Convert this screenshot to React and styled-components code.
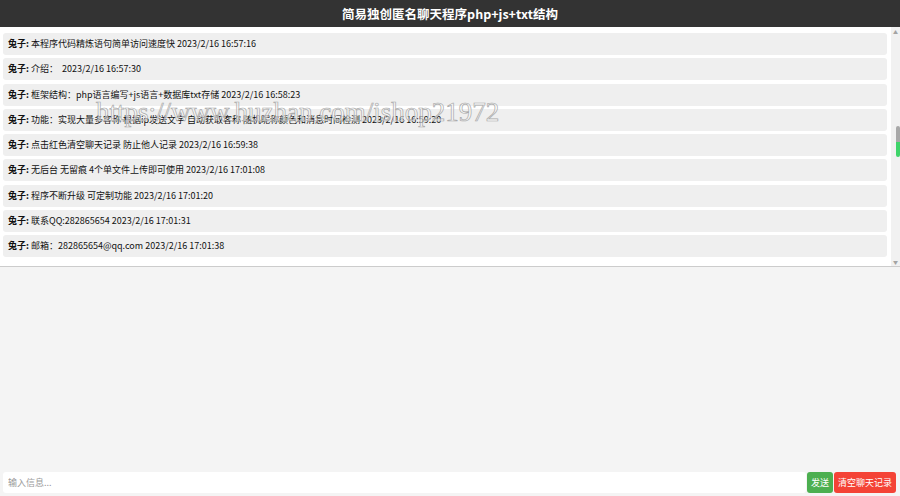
import React from 'react';
import styled, { createGlobalStyle } from 'styled-components';

const messages = [
  { text: '本程序代码精炼语句简单访问速度快', time: '2023/2/16 16:57:16' },
  { text: '介绍： ', time: '2023/2/16 16:57:30' },
  { text: '框架结构：php语言编写+js语言+数据库txt存储', time: '2023/2/16 16:58:23' },
  { text: '功能：实现大量多客称 根据ip发送文字 自动获取客称 随机昵称颜色和消息时间检测', time: '2023/2/16 16:59:20' },
  { text: '点击红色清空聊天记录 防止他人记录', time: '2023/2/16 16:59:38' },
  { text: '无后台 无留痕 4个单文件上传即可使用', time: '2023/2/16 17:01:08' },
  { text: '程序不断升级 可定制功能', time: '2023/2/16 17:01:20' },
  { text: '联系QQ:282865654', time: '2023/2/16 17:01:31' },
  { text: '邮箱：282865654@qq.com', time: '2023/2/16 17:01:38' },
];

export default function App() {
  return (
    <>
      <GlobalStyle />
      <Page>
        <Header>简易独创匿名聊天程序php+js+txt结构</Header>
        <ChatBox>
          <MessageList>
            {messages.map((m, i) => (
              <Message key={i}>
                <Nick>兔子:</Nick> {m.text} {m.time}
              </Message>
            ))}
          </MessageList>
          <ScrollTrack>
            <Arrow>▲</Arrow>
            <ThumbArea>
              <Thumb />
            </ThumbArea>
            <Arrow>▼</Arrow>
          </ScrollTrack>
          <Watermark>https://www.huzhan.com/ishop21972</Watermark>
        </ChatBox>
        <Spacer />
        <InputRow>
          <MessageInput placeholder="输入信息..." />
          <ActionButton color="#4caf50">发送</ActionButton>
          <ActionButton color="#f44336">清空聊天记录</ActionButton>
        </InputRow>
      </Page>
    </>
  );
}

const GlobalStyle = createGlobalStyle`
  html, body {
    margin: 0;
    padding: 0;
    height: 100%;
  }
  body {
    font-family: "Noto Sans CJK SC", "Noto Sans", sans-serif;
    background: #f4f4f4;
  }
  #root {
    height: 100%;
  }
`;

const Page = styled.div`
  display: flex;
  flex-direction: column;
  height: 100vh;
`;

const Header = styled.div`
  height: 27px;
  flex-shrink: 0;
  background: #333333;
  color: #fff;
  font-weight: bold;
  font-size: 12.5px;
  display: flex;
  align-items: center;
  justify-content: center;
`;

const ChatBox = styled.div`
  position: relative;
  height: 239px;
  flex-shrink: 0;
  background: #fff;
  border-bottom: 1px solid #cccccc;
  display: flex;
  overflow: hidden;
`;

const MessageList = styled.div`
  flex: 1;
  padding: 6px 4px 0 3px;
  display: flex;
  flex-direction: column;
  gap: 3.25px;
`;

const Message = styled.div`
  background: #efefef;
  border-radius: 3px;
  height: 22px;
  line-height: 22px;
  padding: 0 5px;
  font-size: 9px;
  color: #111;
  white-space: pre;
`;

const Nick = styled.span`
  font-weight: bold;
`;

const ScrollTrack = styled.div`
  width: 9px;
  background: #f1f1f1;
  display: flex;
  flex-direction: column;
`;

const Arrow = styled.div`
  height: 9px;
  font-size: 5px;
  color: #a3a3a3;
  display: flex;
  align-items: center;
  justify-content: center;
`;

const ThumbArea = styled.div`
  flex: 1;
  padding-top: 90px;
  display: flex;
  justify-content: flex-end;
`;

const Thumb = styled.div`
  width: 4px;
  height: 31px;
  border-radius: 2px;
  background: linear-gradient(#a8a8a8 0 50%, #3fd46a 50% 100%);
`;

const Watermark = styled.div`
  position: absolute;
  left: 96px;
  top: 70px;
  font-family: "Liberation Serif", serif;
  font-size: 27px;
  color: rgba(255, 255, 255, 0.55);
  -webkit-text-stroke: 0.7px #a9a9a9;
  pointer-events: none;
  white-space: nowrap;
`;

const Spacer = styled.div`
  flex: 1;
`;

const InputRow = styled.div`
  display: flex;
  padding: 0 4px 3px 3px;
  gap: 1px;
`;

const MessageInput = styled.input`
  flex: 1;
  height: 21px;
  box-sizing: border-box;
  border: none;
  border-radius: 3px;
  background: #fff;
  padding: 0 5px;
  font-size: 9px;
  font-family: "Noto Sans CJK SC", "Noto Sans", sans-serif;
  outline: none;

  &::placeholder {
    color: #9a9a9a;
  }
`;

const ActionButton = styled.button`
  height: 21px;
  border: none;
  border-radius: 3px;
  background: ${(p) => p.color};
  color: #fff;
  font-size: 9px;
  font-family: "Noto Sans CJK SC", "Noto Sans", sans-serif;
  padding: 0 4px;
  cursor: pointer;
`;
